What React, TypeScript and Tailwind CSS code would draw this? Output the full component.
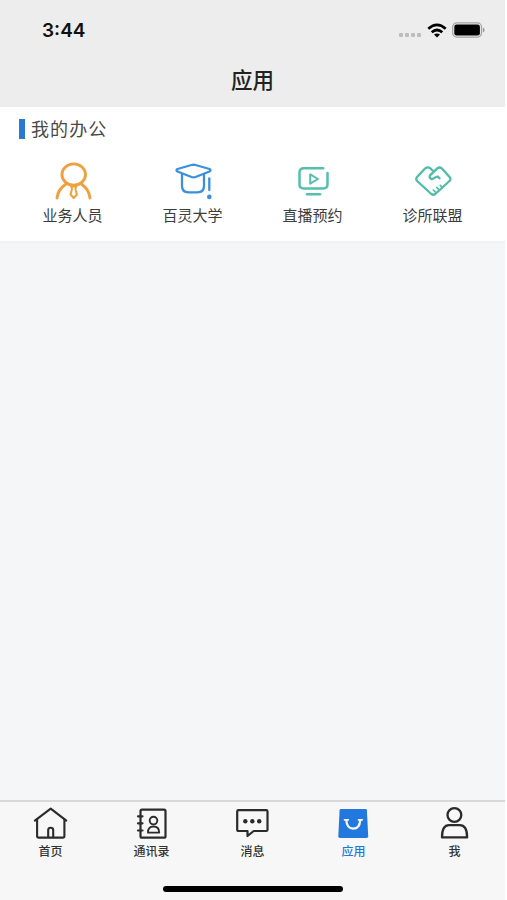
import React from 'react';

interface IconItem {
  label: string;
  icon: React.ReactNode;
  active?: boolean;
}

const stroke = {
  fill: 'none',
  strokeLinecap: 'round' as const,
  strokeLinejoin: 'round' as const,
};

const StaffIcon = () => (
  <svg className="h-10 w-10" viewBox="0 0 40 40" stroke="#f0a03c" strokeWidth="2.9" {...stroke}>
    <ellipse cx="20.7" cy="14.6" rx="11.8" ry="10.7" />
    <path d="M4 38C4.600 32 7.600 27.600 12.800 24.200M37 38C36.400 32 33.600 27.600 28.600 24.200" />
    <path d="M18.200 26.500h5l-.8 2.500 1.500 5.500-3.200 3.500-3.200-3.500 1.500-5.500z" strokeWidth="2" />
  </svg>
);

const CollegeIcon = () => (
  <svg className="h-10 w-10" viewBox="0 0 40 40" stroke="#3c8fdc" strokeWidth="2.300" {...stroke}>
    <path d="M18.500 5Q20.500 4.500 22.500 5L36.500 9Q38.500 10.200 36.500 11.500L22.500 17Q20.500 17.800 18.500 17L4.500 11.500Q2.500 10.200 4.500 9Z" />
    <path d="M9 14.500V26Q9 32.300 15.500 32.300H24.500Q31 32.300 31 26V14.500" />
    <path d="M36.300 18.500V30" />
    <circle cx="36.300" cy="36.900" r="2.300" fill="#3c8fdc" stroke="none" />
  </svg>
);

const LiveIcon = () => (
  <svg className="h-10 w-10" viewBox="0 0 40 40" stroke="#55bfae" strokeWidth="2.500" {...stroke}>
    <path d="M30.300 8.300H10.700Q6.500 8.300 6.500 12.500V24.300Q6.500 28.500 10.700 28.500H30.300Q34.500 28.500 34.500 24.300V13" />
    <path d="M17.200 14.300V23.700L25 19Z" strokeWidth="2" />
    <path d="M14 34.200H27" />
  </svg>
);

const ClinicIcon = () => (
  <svg className="h-10 w-10" viewBox="0 0 40 40" stroke="#50bca9" strokeWidth="2.300" {...stroke}>
    <path d="M20.500 11.300L17 8Q14.500 6.500 12.300 8.300L3.800 17.300Q2.600 19.200 4.100 21L18.300 34Q20.300 35.500 22.300 34L37 20.500Q38 19 37 17.500L28.700 8.300Q26.600 6.700 24.300 8.300L17 15.300Q16 17.500 18 18.800Q20 19.500 22 17.500L24.800 16.500L26.500 18.300" />
    <path d="M27.300 25.300L29.500 27.500M23.700 27.500L26.300 30.100M20.300 30L23 32.700" strokeWidth="1.700" />
  </svg>
);

const HomeIcon = () => (
  <svg className="h-9 w-9" viewBox="0 0 36 36" stroke="#2b2b2b" strokeWidth="2.100" {...stroke}>
    <path d="M1.900 15.600L17.700 3.600L33.300 15.600" />
    <path d="M4.100 14.300V31Q4.100 32.600 5.700 32.600H29.800Q31.400 32.600 31.400 31V14.300" />
    <path d="M15.200 32V25Q15.200 22.700 17.700 22.700T20.200 25V32" />
  </svg>
);

const ContactsIcon = () => (
  <svg className="h-9 w-9" viewBox="0 0 36 36" stroke="#2b2b2b" strokeWidth="2.200" {...stroke}>
    <rect x="6.500" y="4.700" width="25" height="28" rx="1.500" />
    <path d="M4 11.300h4.500M4 18.300h4.500M4 25.500h4.500" />
    <circle cx="19.500" cy="15.600" r="3.800" strokeWidth="1.900" />
    <path d="M14 27.600Q13.800 21.500 19.500 21.500T25.200 27.600Z" strokeWidth="1.900" />
  </svg>
);

const MessageIcon = () => (
  <svg className="h-9 w-9" viewBox="0 0 36 36" stroke="#2b2b2b" strokeWidth="2.200" {...stroke}>
    <path d="M3.500 5.200H31.200Q32.500 5.200 32.500 6.500V24.700Q32.500 26 31.200 26H18.700L12.500 31V26H3.500Q2.200 26 2.200 24.700V6.500Q2.200 5.200 3.500 5.200Z" />
    <g fill="#2b2b2b" stroke="none">
      <circle cx="10.300" cy="16.200" r="2.200" />
      <circle cx="17.300" cy="16.200" r="2.200" />
      <circle cx="24.200" cy="16.200" r="2.200" />
    </g>
  </svg>
);

const AppsIcon = () => (
  <svg className="h-9 w-9" viewBox="0 0 36 36" {...stroke}>
    <path d="M5 4H29.500Q30.800 4 30.900 5.300L32.200 31.200Q32.200 33 30.500 33H4Q2.300 33 2.300 31.200L3.600 5.300Q3.700 4 5 4Z" fill="#2378de" />
    <path d="M10.300 15.300Q10.800 23.600 17.200 23.600T24.200 15.300" stroke="#f7f7f7" strokeWidth="2.200" />
    <path d="M8.500 14.800h3.800M22.500 14.800h3.800" stroke="#f7f7f7" strokeWidth="1.700" />
  </svg>
);

const ProfileIcon = () => (
  <svg className="h-9 w-9" viewBox="0 0 36 36" stroke="#2b2b2b" strokeWidth="2.300" {...stroke}>
    <circle cx="17.400" cy="10" r="6.900" />
    <path d="M5 32.400Q5 20.200 12 20.200H22.800Q30.100 20.200 30.100 32.400Z" />
  </svg>
);

const apps: IconItem[] = [
  { label: '业务人员', icon: <StaffIcon /> },
  { label: '百灵大学', icon: <CollegeIcon /> },
  { label: '直播预约', icon: <LiveIcon /> },
  { label: '诊所联盟', icon: <ClinicIcon /> },
];

const tabs: IconItem[] = [
  { label: '首页', icon: <HomeIcon /> },
  { label: '通讯录', icon: <ContactsIcon /> },
  { label: '消息', icon: <MessageIcon /> },
  { label: '应用', icon: <AppsIcon />, active: true },
  { label: '我', icon: <ProfileIcon /> },
];

const StatusBar = () => (
  <div className="flex h-[60px] items-center justify-between pr-[20px] pl-[42px]">
    <span className="mt-[3px] font-['Inter','Liberation_Sans',sans-serif] text-[19px] font-semibold text-[#111]">3:44</span>
    <div className="flex items-center">
      <div className="mt-[9px] mr-[6px] flex gap-[2px]">
        {[0, 1, 2, 3].map((dot) => (
          <span key={dot} className="h-1 w-1 rounded-[1px] bg-[#bdbdbd]" />
        ))}
      </div>
      <svg className="mr-[5px] h-[15px] w-5" viewBox="0 0 20 15" fill="none" stroke="#000" strokeWidth="2.700">
        <path d="M1.300 5.700Q10 -2 18.700 5.700" />
        <path d="M4.700 9.300Q10 4.700 15.300 9.300" />
        <path d="M10 14.500L7 11.500Q10 9.300 13 11.500Z" fill="#000" stroke="none" />
      </svg>
      <svg className="h-4 w-[33px]" viewBox="0 0 33 16">
        <rect x="0.700" y="0.900" width="28.800" height="14.200" rx="4" fill="none" stroke="#a3a3a3" strokeWidth="1.200" />
        <rect x="2.300" y="2.500" width="25.600" height="11" rx="2.300" fill="#000" />
        <path d="M30.900 5.500Q32.600 6.300 32.600 8T30.900 10.500Z" fill="#999" />
      </svg>
    </div>
  </div>
);

export default function App() {
  return (
    <div className="h-[900px] w-[507px] bg-white">
      <div className="flex h-full w-[505px] flex-col bg-[#f4f6f8] font-['Noto_Sans_CJK_SC',sans-serif]">
        <header className="h-[107px] bg-[#ededed]">
          <StatusBar />
          <h1 className="text-center text-[21.5px] leading-[38px] font-medium text-[#222]">应用</h1>
        </header>

        <section className="h-[136px] border-b-2 border-[#eff1f3] bg-white">
          <div className="flex h-[43px] items-center pl-[19px]">
            <span className="mr-1.5 h-5 w-1.5 bg-[#2878d4]" />
            <h2 className="text-[18px] tracking-[1.1px] text-[#484848]">我的办公</h2>
          </div>
          <div className="grid grid-cols-4 px-[12.5px] pt-[10px]">
            {apps.map((app) => (
              <button key={app.label} className="flex flex-col items-center">
                {app.icon}
                <span className="mt-[4px] text-[15px] leading-[22px] text-[#3c3c3c]">{app.label}</span>
              </button>
            ))}
          </div>
        </section>

        <main className="flex-1" />

        <nav className="flex h-[100px] flex-col border-t-2 border-[#d6d8da] bg-[#f7f7f7]">
          <div className="grid grid-cols-5 pt-[3px]">
            {tabs.map((tab) => (
              <button
                key={tab.label}
                className={`flex flex-col items-center text-[12px] leading-[18px] ${tab.active ? 'text-[#2378de]' : 'text-[#333]'}`}
              >
                {tab.icon}
                <span className="mt-px font-medium">{tab.label}</span>
              </button>
            ))}
          </div>
          <div className="mt-auto mb-[8px] h-[6px] w-[180px] self-center rounded-full bg-black" />
        </nav>
      </div>
    </div>
  );
}
